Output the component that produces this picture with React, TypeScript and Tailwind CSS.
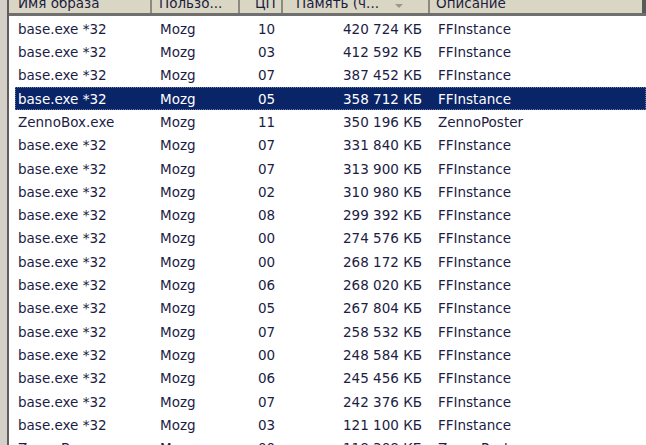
type Row = {
  name: string;
  user: string;
  cpu: string;
  mem: string;
  desc: string;
};

const rows: Row[] = [
  { name: "base.exe *32", user: "Mozg", cpu: "10", mem: "420 724 КБ", desc: "FFInstance" },
  { name: "base.exe *32", user: "Mozg", cpu: "03", mem: "412 592 КБ", desc: "FFInstance" },
  { name: "base.exe *32", user: "Mozg", cpu: "07", mem: "387 452 КБ", desc: "FFInstance" },
  { name: "base.exe *32", user: "Mozg", cpu: "05", mem: "358 712 КБ", desc: "FFInstance" },
  { name: "ZennoBox.exe", user: "Mozg", cpu: "11", mem: "350 196 КБ", desc: "ZennoPoster" },
  { name: "base.exe *32", user: "Mozg", cpu: "07", mem: "331 840 КБ", desc: "FFInstance" },
  { name: "base.exe *32", user: "Mozg", cpu: "07", mem: "313 900 КБ", desc: "FFInstance" },
  { name: "base.exe *32", user: "Mozg", cpu: "02", mem: "310 980 КБ", desc: "FFInstance" },
  { name: "base.exe *32", user: "Mozg", cpu: "08", mem: "299 392 КБ", desc: "FFInstance" },
  { name: "base.exe *32", user: "Mozg", cpu: "00", mem: "274 576 КБ", desc: "FFInstance" },
  { name: "base.exe *32", user: "Mozg", cpu: "00", mem: "268 172 КБ", desc: "FFInstance" },
  { name: "base.exe *32", user: "Mozg", cpu: "06", mem: "268 020 КБ", desc: "FFInstance" },
  { name: "base.exe *32", user: "Mozg", cpu: "05", mem: "267 804 КБ", desc: "FFInstance" },
  { name: "base.exe *32", user: "Mozg", cpu: "07", mem: "258 532 КБ", desc: "FFInstance" },
  { name: "base.exe *32", user: "Mozg", cpu: "00", mem: "248 584 КБ", desc: "FFInstance" },
  { name: "base.exe *32", user: "Mozg", cpu: "06", mem: "245 456 КБ", desc: "FFInstance" },
  { name: "base.exe *32", user: "Mozg", cpu: "07", mem: "242 376 КБ", desc: "FFInstance" },
  { name: "base.exe *32", user: "Mozg", cpu: "03", mem: "121 100 КБ", desc: "FFInstance" },
  { name: "ZennoBox.exe", user: "Mozg", cpu: "00", mem: "118 308 КБ", desc: "ZennoPoster" },
];

const SELECTED = 3;

export default function App() {
  return (
    <div
      className="flex h-[445px] w-[646px] overflow-hidden bg-white text-[13.5px] text-[#1c1c44]"
      style={{ fontFamily: '"DejaVu Sans", Tahoma, sans-serif' }}
    >
      {/* window frame on the left */}
      <div className="w-[7px] shrink-0 bg-[#d4d0c8]" />
      <div className="w-[2px] shrink-0 bg-[#5e5e5e]" />

      <div className="flex min-w-0 flex-1 flex-col">
        {/* Column headers */}
        <div className="flex h-[16px] shrink-0 items-end border-b-[3px] border-[#6f6f6f] bg-[#d9d6c3] leading-none">
          <div className="flex h-full w-[143px] items-end border-r-2 border-r-[#8c8a7e] pb-[3px] pl-[9px]">
            Имя образа
          </div>
          <div className="flex h-full w-[88px] items-end border-r-2 border-r-[#8c8a7e] pb-[3px] pl-[7px]">
            Пользо...
          </div>
          <div className="flex h-full w-[43px] items-end border-r-2 border-r-[#8c8a7e] pb-[3px] pl-[15px]">
            ЦП
          </div>
          <div className="relative flex h-full w-[147px] items-end border-r-2 border-r-[#8c8a7e] pb-[3px] pl-[13px]">
            Память (ч...
            <span className="absolute left-[112px] top-[4px] h-0 w-0 border-x-[4px] border-t-[4px] border-x-transparent border-t-[#9a988c]" />
          </div>
          <div className="flex h-full flex-1 items-end pb-[3px] pl-[6px]">Описание</div>
          <div className="h-full w-[4px] bg-[#5a5a5a]" />
        </div>

        {/* Process list */}
        <div className="mt-[1px] flex flex-col">
          {rows.map((r, i) => {
            const selected = i === SELECTED;
            return (
              <div
                key={i}
                className={
                  selected
                    ? "ml-[6px] flex h-[23.33px] shrink-0 items-center border border-dotted border-[#6c7aa8] bg-[#0a2468] text-white"
                    : "ml-[6px] flex h-[23.33px] shrink-0 items-center border border-transparent"
                }
              >
                <div className="w-[136px] pl-[2px] whitespace-nowrap">{r.name}</div>
                <div className="w-[88px] pl-[8px]">{r.user}</div>
                <div className="w-[43px] pl-[18px]">{r.cpu}</div>
                <div className="w-[147px] pr-[8px] text-right whitespace-nowrap">{r.mem}</div>
                <div className="flex-1 pl-[8px] whitespace-nowrap">{r.desc}</div>
              </div>
            );
          })}
        </div>
      </div>
    </div>
  );
}
